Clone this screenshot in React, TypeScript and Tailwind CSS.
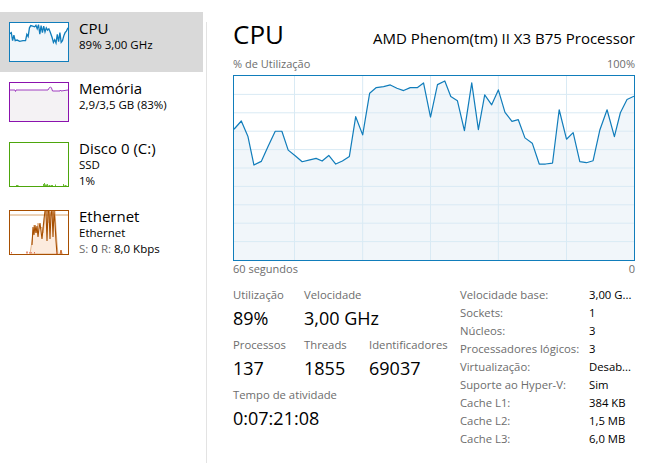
import React from "react";

const mainPts: [number, number][] = [
  [40,175],[62,150],[82,197],[100,283],[122,272],[142,228],[164,181],[184,181],[203,238],[224,255],[245,273],[265,268],[287,263],[305,271],[325,254],[346,280],[366,271],[387,257],[406,137],[427,192],[448,66],[468,49],[490,46],[510,41],[530,51],[550,58],[570,49],[592,49],[610,35],[631,138],[652,40],[674,29],[692,76],[712,89],[733,179],[755,35],[775,176],[794,71],[815,101],[835,56],[855,124],[876,151],[895,146],[915,201],[937,217],[958,280],[977,280],[998,277],[1018,116],[1040,205],[1060,185],[1080,273],[1100,276],[1120,270],[1140,178],[1162,116],[1184,197],[1202,125],[1222,85],[1243,75],
];

const cpuThumb: [number, number][] = [
  [0,33],[4,30],[8,55],[12,38],[16,55],[22,53],[30,57],[40,55],[48,55],[52,35],[56,42],[60,15],[64,8],[70,10],[76,12],[80,7],[84,18],[88,5],[92,35],[96,8],[100,30],[104,10],[108,28],[112,15],[116,22],[120,18],[124,28],[130,45],[134,60],[138,52],[142,62],[146,35],[150,58],[154,30],[158,60],[162,55],[166,40],[170,30],[174,25],[179,15],
];

function toStr(pts: [number, number][], dx = 0, dy = 0) {
  return pts.map(([x, y]) => `${x - dx},${y - dy}`).join(" ");
}

const font = { fontFamily: '"Segoe UI", "Open Sans", "Noto Sans", sans-serif' };

function MainGraph() {
  const line = toStr(mainPts, 40, 14);
  const area = `0,556 ${line} 1203,556`;
  const vx = [182, 387, 591, 795, 1000];
  const hy = [55.6, 111.2, 166.8, 222.4, 278, 333.6, 389.2, 444.8, 500.4];
  return (
    <div className="relative w-[402px] h-[186px] border border-[#117dbb] bg-white">
      <svg className="absolute inset-0 w-full h-full" viewBox="0 0 1203 556" preserveAspectRatio="none">
        <polygon points={area} fill="#f1f6fa" />
        {vx.map((x) => (
          <line key={x} x1={x} y1={0} x2={x} y2={556} stroke="#d9eaf4" strokeWidth={1} vectorEffect="non-scaling-stroke" />
        ))}
        {hy.map((y) => (
          <line key={y} x1={0} y1={y} x2={1203} y2={y} stroke="#d9eaf4" strokeWidth={1} vectorEffect="non-scaling-stroke" />
        ))}
        <polyline points={line} fill="none" stroke="#117dbb" strokeWidth={1.2} vectorEffect="non-scaling-stroke" strokeLinejoin="round" />
      </svg>
    </div>
  );
}

function CpuThumb() {
  const line = toStr(cpuThumb);
  return (
    <div className="w-[60px] h-[40px] border border-[#117dbb] bg-white relative">
      <svg className="absolute inset-0 w-full h-full" viewBox="0 0 179 118" preserveAspectRatio="none">
        <polygon points={`0,118 ${line} 179,118`} fill="#f1f6fa" />
        <polyline points={line} fill="none" stroke="#117dbb" strokeWidth={1.3} vectorEffect="non-scaling-stroke" />
      </svg>
    </div>
  );
}

function MemThumb() {
  const pts = "0,7 5,7 5.5,8.5 6,7 38,7 39.5,4.5 40.5,4 41.5,5 42.5,8 50,8 50.5,7 51,8 58,7";
  return (
    <div className="w-[60px] h-[40px] border border-[#8b12ae] bg-white relative">
      <svg className="absolute inset-0 w-full h-full" viewBox="0 0 58 38" preserveAspectRatio="none">
        <polygon points={`0,38 ${pts} 58,38`} fill="#f4f2f4" />
        <polyline points={pts} fill="none" stroke="#a03fc0" strokeWidth={1} vectorEffect="non-scaling-stroke" />
      </svg>
    </div>
  );
}

function DiskThumb() {
  const bars: [number, number, number][] = [
    [6, 2, 1], [7.5, 1, 1], [33, 1, 2], [34, 1, 3], [35, 2, 1.5], [37, 1, 2], [38.5, 2, 1], [41, 2, 1], [45, 1, 1.5], [53, 1, 2], [54.5, 2, 1],
  ];
  return (
    <div className="w-[60px] h-[45px] border border-[#4da60c] bg-white relative">
      <svg className="absolute inset-0 w-full h-full" viewBox="0 0 58 43" preserveAspectRatio="none">
        {bars.map(([x, w, h], i) => (
          <rect key={i} x={x} y={43 - h} width={w} height={h} fill="#6fbf3a" />
        ))}
      </svg>
    </div>
  );
}

function EthThumb() {
  const light = "20,43 22,30 24,14 26,22 28,12 30,18 32,16 33,22 35,6 36,0 38,0 39,12 40,0 42,0 43,4 44,0 45,0 46,18 47,32 48,43";
  const dark1 = "22,34 23,16 24,24 25,14 26,22 27,15 28,26 29,17 30,12 31,20 32,28 33,18 34,8 35,0";
  const dark2 = "36,0 37,30 38,0 39,0 40,28 41,2 42,0 43,26 44,0 45,12 46,30 47,43";
  return (
    <div className="w-[60px] h-[45px] border border-[#a74f01] bg-white relative overflow-hidden">
      <svg className="absolute inset-0 w-full h-full" viewBox="0 0 58 43" preserveAspectRatio="none">
        <polygon points={light} fill="#fcebde" stroke="#e4b58d" strokeWidth={1} vectorEffect="non-scaling-stroke" />
        <line x1={0} y1={4} x2={58} y2={4} stroke="#d8a46f" strokeWidth={1} vectorEffect="non-scaling-stroke" />
        <polyline points={dark1} fill="none" stroke="#a74f01" strokeWidth={1.1} vectorEffect="non-scaling-stroke" />
        <polyline points={dark2} fill="none" stroke="#a74f01" strokeWidth={1.1} vectorEffect="non-scaling-stroke" />
        <rect x={1} y={41} width={1} height={1.5} fill="#e0735a" />
        <rect x={16} y={40.5} width={2} height={2} fill="#e8957a" />
        <rect x={19} y={41} width={3} height={1.5} fill="#e8957a" />
        <rect x={24} y={41} width={1} height={1.5} fill="#e0735a" />
        <rect x={46} y={41} width={1} height={1.5} fill="#e0735a" />
        <polyline points="50,43 51,39 52,43" fill="#e8a07a" stroke="#c96a2a" strokeWidth={1} vectorEffect="non-scaling-stroke" />
      </svg>
    </div>
  );
}

function SideRow({
  selected,
  thumb,
  title,
  lines,
  bottomPad,
}: {
  selected?: boolean;
  thumb: React.ReactNode;
  title: string;
  lines: React.ReactNode[];
  bottomPad: string;
}) {
  return (
    <div className={`flex w-[203px] pl-[9px] ${bottomPad} ${selected ? "bg-[#d9d9d9]" : ""}`}>
      <div className="pt-[10px] shrink-0">{thumb}</div>
      <div className="pl-[10px] pt-[7px]">
        <div className="text-[15px] leading-[18px] text-black whitespace-nowrap">{title}</div>
        {lines.map((l, i) => (
          <div key={i} className="text-[11.5px] leading-[16px] text-black whitespace-nowrap">
            {l}
          </div>
        ))}
      </div>
    </div>
  );
}

function Stat({ label, value, w }: { label: string; value: string; w: string }) {
  return (
    <div className={w}>
      <div className="text-[11.3px] leading-[18px] text-[#6d6d6d] whitespace-nowrap">{label}</div>
      <div className="text-[18px] leading-[28px] text-black whitespace-nowrap">{value}</div>
    </div>
  );
}

const specs: [string, string][] = [
  ["Velocidade base:", "3,00 G..."],
  ["Sockets:", "1"],
  ["Núcleos:", "3"],
  ["Processadores lógicos:", "3"],
  ["Virtualização:", "Desab..."],
  ["Suporte ao Hyper-V:", "Sim"],
  ["Cache L1:", "384 KB"],
  ["Cache L2:", "1,5 MB"],
  ["Cache L3:", "6,0 MB"],
];

export default function App() {
  return (
    <div className="w-[653px] h-[475px] bg-white flex overflow-hidden" style={font}>
      <div className="w-[206px] shrink-0 pt-[12px]">
        <SideRow
          selected
          thumb={<CpuThumb />}
          title="CPU"
          lines={["89%  3,00 GHz"]}
          bottomPad="pb-[10px]"
        />
        <SideRow
          thumb={<MemThumb />}
          title="Memória"
          lines={["2,9/3,5 GB (83%)"]}
          bottomPad="pb-[10px]"
        />
        <SideRow
          thumb={<DiskThumb />}
          title="Disco 0 (C:)"
          lines={["SSD", "1%"]}
          bottomPad="pb-[11px]"
        />
        <SideRow
          thumb={<EthThumb />}
          title="Ethernet"
          lines={[
            "Ethernet",
            <span key="s">
              <span className="text-[#6d6d6d]">S:</span> 0 <span className="text-[#6d6d6d]">R:</span> 8,0 Kbps
            </span>,
          ]}
          bottomPad="pb-[10px]"
        />
      </div>
      <div className="w-px h-[441px] mt-[22px] bg-[#e3e3e3] shrink-0" />
      <div className="flex-1 pl-[26px] pr-[18px] pt-[17px]">
        <div className="flex items-baseline justify-between w-[402px]">
          <div className="text-[26px] leading-[34px] text-black">CPU</div>
          <div className="text-[15px] leading-[20px] text-black whitespace-nowrap">AMD Phenom(tm) II X3 B75 Processor</div>
        </div>
        <div className="flex justify-between w-[402px] text-[11px] leading-[16px] text-[#6d6d6d] mt-[5px]">
          <span>% de Utilização</span>
          <span>100%</span>
        </div>
        <div className="mt-[3px]">
          <MainGraph />
        </div>
        <div className="flex justify-between w-[402px] text-[11px] leading-[16px] text-[#6d6d6d]">
          <span>60 segundos</span>
          <span>0</span>
        </div>
        <div className="flex mt-[9px]">
          <div className="w-[226px] flex flex-col gap-[4px]">
            <div className="flex">
              <Stat label="Utilização" value="89%" w="w-[71px]" />
              <Stat label="Velocidade" value="3,00 GHz" w="w-[65px]" />
            </div>
            <div className="flex">
              <Stat label="Processos" value="137" w="w-[71px]" />
              <Stat label="Threads" value="1855" w="w-[65px]" />
              <Stat label="Identificadores" value="69037" w="w-[80px]" />
            </div>
            <Stat label="Tempo de atividade" value="0:07:21:08" w="w-[150px]" />
          </div>
          <div className="pl-[1px]">
            {specs.map(([k, v]) => (
              <div key={k} className="flex text-[11.3px] leading-[18px]">
                <div className="w-[129px] text-[#6d6d6d] whitespace-nowrap">{k}</div>
                <div className="text-black whitespace-nowrap">{v}</div>
              </div>
            ))}
          </div>
        </div>
      </div>
    </div>
  );
}
